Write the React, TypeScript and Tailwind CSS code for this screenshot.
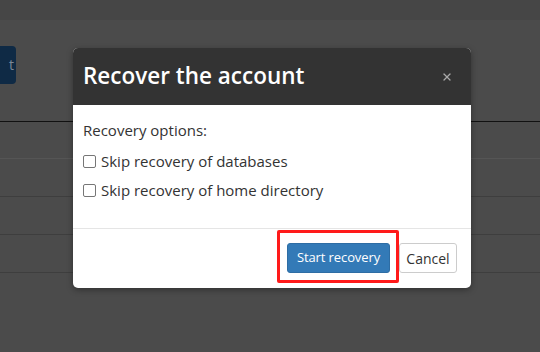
import { X } from "lucide-react";

const font = { fontFamily: '"Open Sans", "Noto Sans", sans-serif' };

function Row() {
  return <div className="h-[38px] border-b border-[#3e3e3e]" />;
}

export default function App() {
  return (
    <div className="relative w-[540px] h-[352px] overflow-hidden bg-[#4b4b4b]" style={font}>
      {/* page behind the backdrop */}
      <div className="h-[20px] bg-[#464646]" />
      <div className="h-[101px] pt-[26px]">
        <div className="w-[16px] h-[38px] rounded-r-[4px] bg-[#0f2a45] flex items-center justify-end pr-[2px] text-[#7b8896] text-sm">
          t
        </div>
      </div>
      <div className="h-[1px] bg-[#111111]" />
      <div className="h-[37px] border-b border-[#555555]" />
      <Row />
      <Row />
      <Row />

      {/* modal */}
      <div className="absolute left-[73px] top-[48px] w-[398px] rounded-[5px] bg-white overflow-hidden shadow-[0_2px_6px_rgba(0,0,0,0.35)]">
        <div className="h-[57px] bg-[#333333] flex items-center justify-between pl-[10px] pr-[18px]">
          <h4 className="text-white text-[22.5px] font-semibold leading-none pb-[1px]">Recover the account</h4>
          <X className="w-[12px] h-[12px] text-[#a9a9a9]" strokeWidth={2.5} />
        </div>
        <div className="px-[10px] pt-[15px] pb-[28px] text-[15px] text-[#333333]">
          <p className="leading-[20px] mb-[11px]">Recovery options:</p>
          <label className="flex items-center gap-[5px] leading-[20px] mb-[9px]">
            <span className="w-[13px] h-[13px] rounded-[2px] border border-[#767676] bg-white" />
            Skip recovery of databases
          </label>
          <label className="flex items-center gap-[5px] leading-[20px]">
            <span className="w-[13px] h-[13px] rounded-[2px] border border-[#767676] bg-white" />
            Skip recovery of home directory
          </label>
        </div>
        <div className="border-t border-[#e5e5e5] flex justify-end items-center gap-[9px] pr-[14px] pt-[14px] pb-[15px]">
          <div className="relative">
            <button className="h-[30px] w-[103px] rounded-[3px] bg-[#337ab7] border border-[#2e6da4] text-white text-[13px] tracking-[-0.1px]">
              Start recovery
            </button>
            <div className="absolute -left-[10px] -top-[13px] -right-[9px] -bottom-[10px] border-[3px] border-[#ff1a1a] rounded-[2px]" />
          </div>
          <button className="h-[30px] w-[58px] rounded-[3px] bg-white border border-[#cccccc] text-[#333333] text-[14px]">
            Cancel
          </button>
        </div>
      </div>
    </div>
  );
}
